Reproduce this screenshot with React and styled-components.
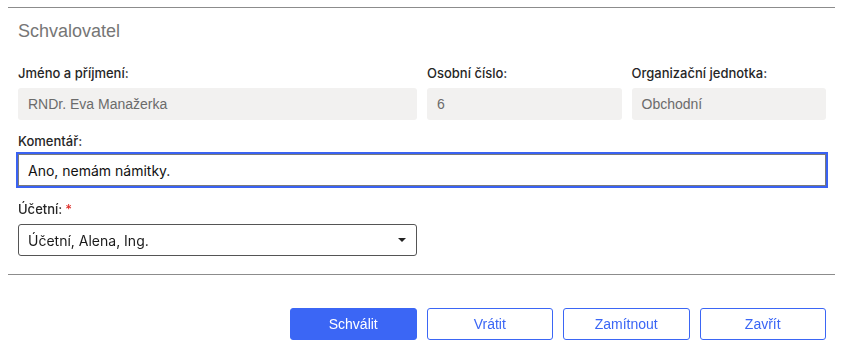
import React from "react";
import styled, { createGlobalStyle } from "styled-components";

const Global = createGlobalStyle`
  html, body { margin: 0; padding: 0; background: #fff; }
  body { font-family: "Liberation Sans", Arial, sans-serif; }
  * { box-sizing: border-box; }
`;

const Page = styled.div`
  padding: 7px 6px 0 8px;
`;

const Section = styled.section`
  border-top: 1px solid #8c8c8c;
  padding: 13px 4px 0 5px;
`;

const Heading = styled.h2`
  margin: 0 0 0 5px;
  font-family: "Liberation Sans", Arial, sans-serif;
  font-size: 18px;
  font-weight: 400;
  line-height: 21px;
  color: #767676;
`;

const Row = styled.div`
  display: grid;
  grid-template-columns: ${(p) => p.$cols || "1fr"};
  margin-top: ${(p) => p.$top || 0}px;
`;

const Field = styled.div`
  padding: 0 5px;
  display: flex;
  flex-direction: column;
`;

const Label = styled.label`
  font-family: Inter, "Liberation Sans", sans-serif;
  font-size: 13px;
  font-weight: 500;
  line-height: 16px;
  color: #262626;
  margin-bottom: ${(p) => p.$gap || 7}px;
`;

const Required = styled.span`
  color: #e0302b;
  margin-left: 3px;
`;

const ReadOnly = styled.div`
  height: 32px;
  display: flex;
  align-items: center;
  padding: 0 10px;
  background: #f2f1f0;
  border-radius: 3px;
  font-family: "Liberation Sans", Arial, sans-serif;
  font-size: 14px;
  color: #6b6b6b;
`;

const TextInput = styled.input`
  height: 32px;
  width: 100%;
  padding: 0 9px;
  border: 1px solid #7a7a7a;
  outline: 2px solid #3a62f2;
  font-family: Inter, "Liberation Sans", sans-serif;
  font-size: 14px;
  color: #111;
  background: #fff;
  caret-color: #111;
`;

const Select = styled.div`
  height: 32px;
  display: flex;
  align-items: center;
  justify-content: space-between;
  padding: 0 10px 0 9px;
  border: 1px solid #555;
  border-radius: 3px;
  font-family: Inter, "Liberation Sans", sans-serif;
  font-size: 14px;
  color: #1a1a1a;
`;

const Caret = styled.span`
  width: 0;
  height: 0;
  border-left: 4px solid transparent;
  border-right: 4px solid transparent;
  border-top: 4px solid #222;
`;

const Divider = styled.hr`
  margin: 18px -4px 0 -5px;
  border: 0;
  border-top: 1px solid #8c8c8c;
`;

const Actions = styled.div`
  display: flex;
  justify-content: flex-end;
  gap: 10px;
  padding: 33px 5px 0 0;
`;

const Button = styled.button`
  width: 126.5px;
  height: 32px;
  border-radius: 3px;
  border: 1px solid #3b66f5;
  background: ${(p) => (p.$primary ? "#3b66f5" : "#fff")};
  color: ${(p) => (p.$primary ? "#fff" : "#3b66f5")};
  font-family: "Liberation Sans", Arial, sans-serif;
  font-size: 14px;
  cursor: pointer;
`;

export default function App() {
  return (
    <Page>
      <Global />
      <Section>
        <Heading>Schvalovatel</Heading>
        <Row $cols="2fr 1fr 1fr" $top={23}>
          <Field>
            <Label>Jméno a příjmení:</Label>
            <ReadOnly>RNDr. Eva Manažerka</ReadOnly>
          </Field>
          <Field>
            <Label>Osobní číslo:</Label>
            <ReadOnly>6</ReadOnly>
          </Field>
          <Field>
            <Label>Organizační jednotka:</Label>
            <ReadOnly>Obchodní</ReadOnly>
          </Field>
        </Row>
        <Row $top={13}>
          <Field>
            <Label $gap={5}>Komentář:</Label>
            <TextInput defaultValue="Ano, nemám námitky." autoFocus />
          </Field>
        </Row>
        <Row $cols="2fr 2fr" $top={15}>
          <Field>
            <Label>
              Účetní:<Required>*</Required>
            </Label>
            <Select>
              <span>Účetní, Alena, Ing.</span>
              <Caret />
            </Select>
          </Field>
        </Row>
        <Divider />
        <Actions>
          <Button $primary>Schválit</Button>
          <Button>Vrátit</Button>
          <Button>Zamítnout</Button>
          <Button>Zavřít</Button>
        </Actions>
      </Section>
    </Page>
  );
}
